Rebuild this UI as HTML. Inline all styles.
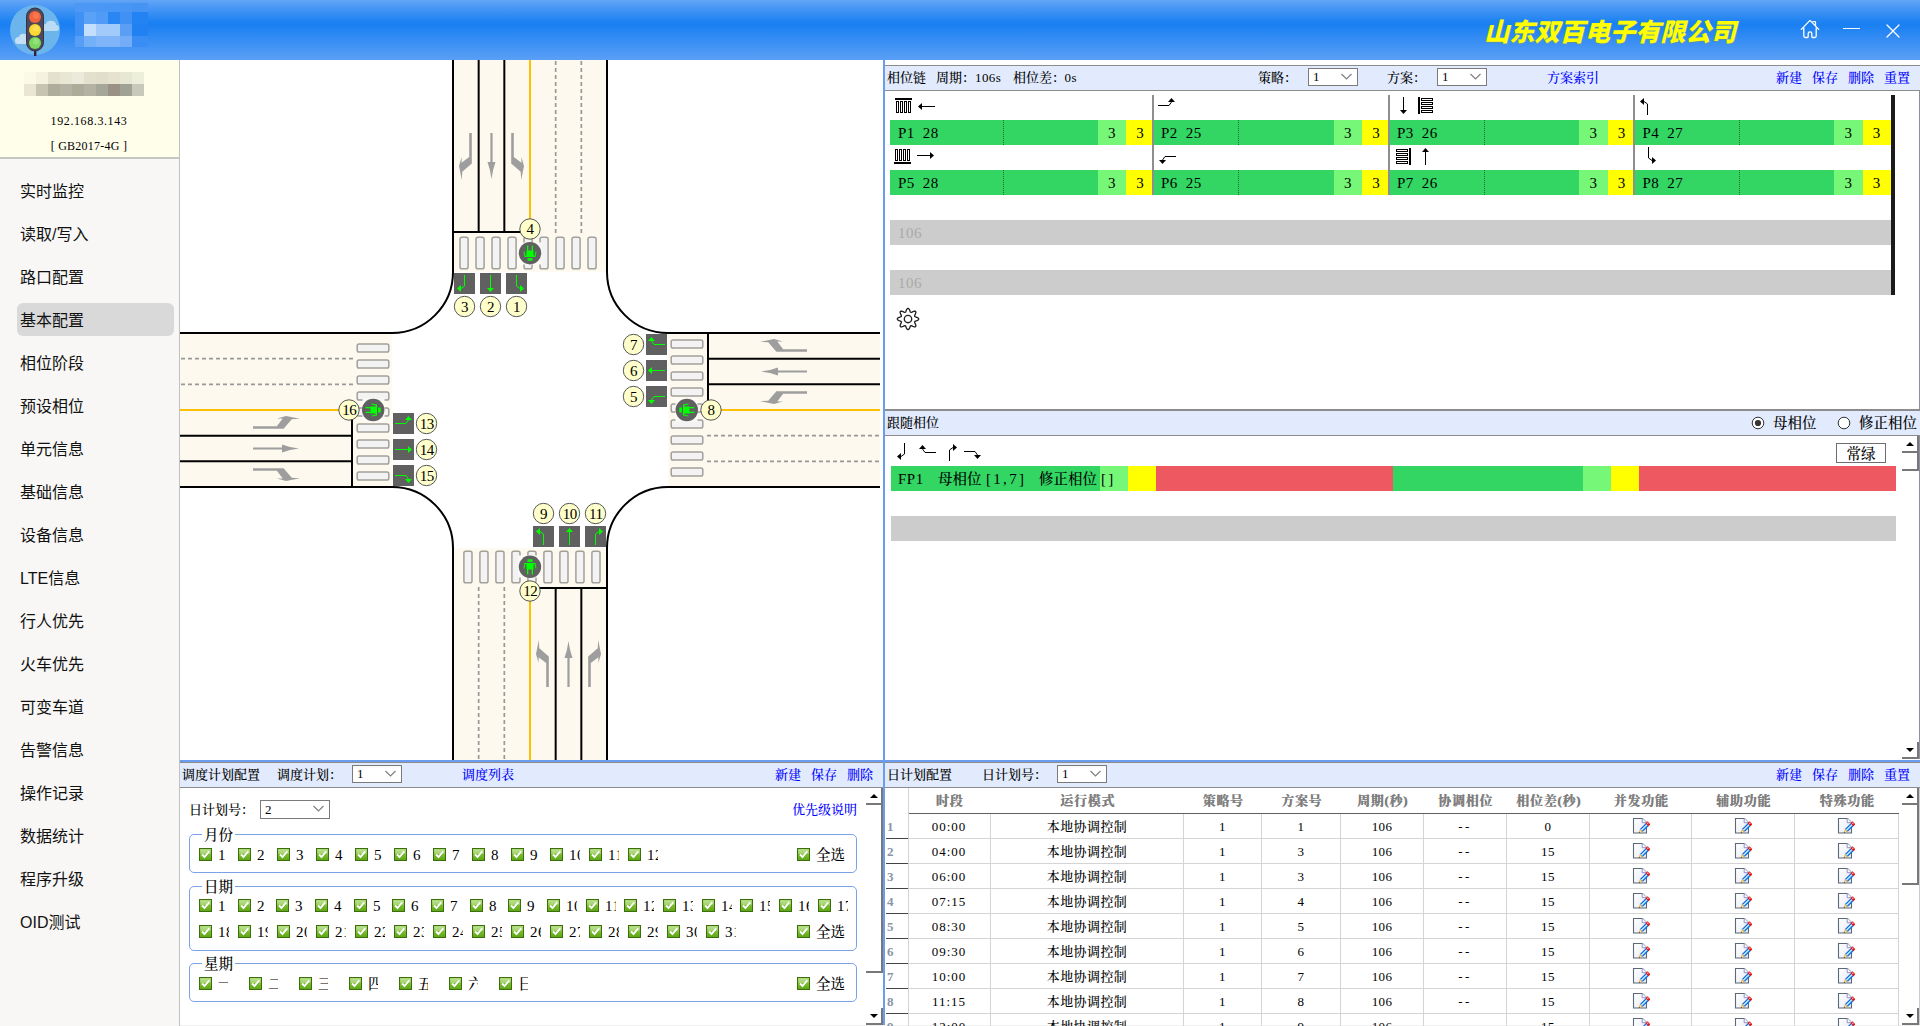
<!DOCTYPE html><html lang="zh"><head><meta charset="utf-8"><title>信号机配置</title><style>

html,body{margin:0;padding:0}
body{width:1920px;height:1026px;overflow:hidden;background:#fff;position:relative;font-family:'Liberation Serif','Noto Serif CJK SC',serif;font-size:12px;color:#000;line-height:14px;font-weight:500}
div,span,svg{position:absolute;box-sizing:border-box}
.t{white-space:nowrap;height:14px;line-height:14px;font-size:13px;margin-left:-1px}
.b{color:#0000ff}
.hd{background:#e1ebfd;border-top:1px solid #8c8c8c;border-bottom:1px solid #8c8c8c}
.sel{background:#fff;border:1px solid #7a7a7a;height:18px;font-size:13px;line-height:16px;padding-left:4px}
.menu{left:20px;font-weight:400;font-family:'Liberation Sans','Noto Sans CJK SC',sans-serif;font-size:16px;line-height:20px;height:20px;color:#111;white-space:nowrap}
.bar{height:25px;line-height:27px;overflow:hidden;font-size:15px;white-space:nowrap;letter-spacing:.5px;word-spacing:3.700px}
.cb{width:13px;height:13px}
.cl{font-size:15px;letter-spacing:.5px;line-height:16px;height:16px;overflow:hidden;white-space:nowrap;font-family:'Liberation Serif','Noto Serif CJK SC',serif}
.gb{border:1px solid #7ba2e7;border-radius:5px}
.gl{background:#fff;font-size:14.500px;line-height:16px;height:16px;padding:0 2px;white-space:nowrap}
.th{font-weight:bold;color:#7f7f7f;text-shadow:.5px 0 0 #7f7f7f;text-align:center;font-size:13px;letter-spacing:.7px;height:25px;line-height:25px;white-space:nowrap}
.td{text-align:center;font-size:13px;height:25px;line-height:25px;white-space:nowrap;border-right:1px solid #d4d4d4;border-bottom:1px solid #d4d4d4}
.rh{font-size:13px;height:25px;line-height:25px;color:#8a95a5;font-weight:bold;border-bottom:1px solid #444;border-right:1px solid #d4d4d4;padding-left:1px}

</style></head><body>
<svg width="0" height="0" style="left:0;top:0"><defs><linearGradient id="cg" x1="0" y1="0" x2="0" y2="1"><stop offset="0" stop-color="#a9d971"/><stop offset=".5" stop-color="#7cbf2e"/><stop offset="1" stop-color="#5ba511"/></linearGradient><linearGradient id="pg" x1="0" y1="0" x2="1" y2="1"><stop offset="0" stop-color="#fff"/><stop offset="1" stop-color="#e6eaf4"/></linearGradient><symbol id="cb" viewBox="0 0 13 13"><rect x=".5" y=".5" width="12" height="12" fill="url(#cg)" stroke="#3c6e0d"/><rect x="1.500" y="1.500" width="10" height="4.500" fill="#fff" opacity=".28"/><path d="M3.200 7.300 L5.600 9.600 L10.300 4.200" fill="none" stroke="#4a8a14" stroke-width="2" opacity=".5"/><path d="M3 6.500 L5.500 9 L10.300 3.400" fill="none" stroke="#fff" stroke-width="1.900"/></symbol><symbol id="ed" viewBox="0 0 18 18"><path d="M1.500 1.500 H10.500 L14.500 5.500 V16 H1.500 Z" fill="url(#pg)" stroke="#5d6878" stroke-width="1.1"/><path d="M10.200 1.800 V5.700 H14.200" fill="#fff" stroke="#8a84c8" stroke-width=".9"/><path d="M10.500 1.500 L14.500 5.500" stroke="#c0c6d0" stroke-width="1"/><path d="M13.79 6.18 L7.99 11.98 L10.82 14.81 L16.62 9.01 Z" fill="#0b5fd6"/><path d="M14.57 6.96 L8.77 12.76 L9.90 13.89 L15.70 8.09 Z" fill="#bdeaff"/><path d="M15.70 8.09 L9.90 13.89 L10.25 14.24 L16.05 8.45 Z" fill="#2f9bf0"/><path d="M15.63 4.34 L13.65 6.32 L16.48 9.15 L18.46 7.17 Z" fill="#e8140f"/><circle cx="15.800" cy="6.200" r=".7" fill="#ffd0e8"/><path d="M7.99 11.98 L10.82 14.81 L6.86 15.94 Z" fill="#d9a030"/><path d="M8.34 13.18 L9.62 14.46 L7.71 15.09 Z" fill="#fff6da"/><path d="M7.14 14.81 L7.99 15.66 L6.72 16.08 Z" fill="#3a3020"/></symbol></defs></svg>
<div style="left:0;top:60px;width:180px;height:966px;background:#f8f7f5;border-right:1px solid #bfc2bf"></div>
<div style="left:0;top:60px;width:179px;height:99px;background:#fffeeb;border-bottom:2px solid #c4c8c0"></div>
<div style="left:24px;top:72px;width:12px;height:12px;background:#fbfae6"></div>
<div style="left:24px;top:84px;width:12px;height:12px;background:#e9e7d3"></div>
<div style="left:36px;top:72px;width:12px;height:12px;background:#f5f3df"></div>
<div style="left:36px;top:84px;width:12px;height:12px;background:#c7c5b2"></div>
<div style="left:48px;top:72px;width:12px;height:12px;background:#e4e2cc"></div>
<div style="left:48px;top:84px;width:12px;height:12px;background:#aeac9b"></div>
<div style="left:60px;top:72px;width:12px;height:12px;background:#e8e7d3"></div>
<div style="left:60px;top:84px;width:12px;height:12px;background:#b4b3a4"></div>
<div style="left:72px;top:72px;width:12px;height:12px;background:#eceada"></div>
<div style="left:72px;top:84px;width:12px;height:12px;background:#adac9b"></div>
<div style="left:84px;top:72px;width:12px;height:12px;background:#e3e1cd"></div>
<div style="left:84px;top:84px;width:12px;height:12px;background:#b3b2a3"></div>
<div style="left:96px;top:72px;width:12px;height:12px;background:#e1dfca"></div>
<div style="left:96px;top:84px;width:12px;height:12px;background:#a7a799"></div>
<div style="left:108px;top:72px;width:12px;height:12px;background:#e5e3cf"></div>
<div style="left:108px;top:84px;width:12px;height:12px;background:#999285"></div>
<div style="left:120px;top:72px;width:12px;height:12px;background:#e8e7d3"></div>
<div style="left:120px;top:84px;width:12px;height:12px;background:#a1a296"></div>
<div style="left:132px;top:72px;width:12px;height:12px;background:#edeedc"></div>
<div style="left:132px;top:84px;width:12px;height:12px;background:#c8c9bb"></div>
<div class="t" style="left:0;top:114px;width:178px;margin-left:0;text-align:center;font-size:12px;letter-spacing:.6px">192.168.3.143</div>
<div class="t" style="left:0;top:139px;width:178px;margin-left:0;text-align:center;font-size:12px;letter-spacing:.25px">[ GB2017-4G ]</div>
<div style="left:17px;top:303px;width:157px;height:33px;background:#d9d9d9;border-radius:6px"></div>
<div class="menu" style="top:182px">实时监控</div>
<div class="menu" style="top:225px">读取/写入</div>
<div class="menu" style="top:268px">路口配置</div>
<div class="menu" style="top:311px">基本配置</div>
<div class="menu" style="top:354px">相位阶段</div>
<div class="menu" style="top:397px">预设相位</div>
<div class="menu" style="top:440px">单元信息</div>
<div class="menu" style="top:483px">基础信息</div>
<div class="menu" style="top:526px">设备信息</div>
<div class="menu" style="top:569px">LTE信息</div>
<div class="menu" style="top:612px">行人优先</div>
<div class="menu" style="top:655px">火车优先</div>
<div class="menu" style="top:698px">可变车道</div>
<div class="menu" style="top:741px">告警信息</div>
<div class="menu" style="top:784px">操作记录</div>
<div class="menu" style="top:827px">数据统计</div>
<div class="menu" style="top:870px">程序升级</div>
<div class="menu" style="top:913px">OID测试</div>
<svg style="left:180px;top:60px" width="700" height="700" viewBox="-350 -350 700 700">
<rect x="-350" y="-350" width="700" height="700" fill="#fff"/>
<g transform="rotate(0)"><rect x="-77" y="138.300" width="154" height="214" fill="#fdf9ee"/>
<line x1="-25.67" y1="177" x2="-25.67" y2="352" stroke="#999" stroke-width="1.7" stroke-dasharray="4,3"/>
<line x1="-51.33" y1="177" x2="-51.33" y2="352" stroke="#999" stroke-width="1.7" stroke-dasharray="4,3"/>
<line x1="0" y1="182" x2="0" y2="352" stroke="#ffc000" stroke-width="2"/>
<line x1="25.67" y1="178" x2="25.67" y2="352" stroke="#000" stroke-width="2"/>
<line x1="51.33" y1="178" x2="51.33" y2="352" stroke="#000" stroke-width="2"/>
<line x1="0" y1="178" x2="78" y2="178" stroke="#000" stroke-width="2"/>
<rect x="-66.1" y="141.200" width="8.1" height="31.600" rx="1.8" fill="#f3f3f3" stroke="#a3a09c" stroke-width="1.5"/>
<rect x="-50.1" y="141.200" width="8.1" height="31.600" rx="1.8" fill="#f3f3f3" stroke="#a3a09c" stroke-width="1.5"/>
<rect x="-34.1" y="141.200" width="8.1" height="31.600" rx="1.8" fill="#f3f3f3" stroke="#a3a09c" stroke-width="1.5"/>
<rect x="-18.1" y="141.200" width="8.1" height="31.600" rx="1.8" fill="#f3f3f3" stroke="#a3a09c" stroke-width="1.5"/>
<rect x="-2.1" y="141.200" width="8.1" height="31.600" rx="1.8" fill="#f3f3f3" stroke="#a3a09c" stroke-width="1.5"/>
<rect x="13.9" y="141.200" width="8.1" height="31.600" rx="1.8" fill="#f3f3f3" stroke="#a3a09c" stroke-width="1.5"/>
<rect x="29.9" y="141.200" width="8.1" height="31.600" rx="1.8" fill="#f3f3f3" stroke="#a3a09c" stroke-width="1.5"/>
<rect x="45.9" y="141.200" width="8.1" height="31.600" rx="1.8" fill="#f3f3f3" stroke="#a3a09c" stroke-width="1.5"/>
<rect x="61.9" y="141.200" width="8.1" height="31.600" rx="1.8" fill="#f3f3f3" stroke="#a3a09c" stroke-width="1.5"/>
<path d="M-77 352 L-77 138 A61 61 0 0 0 -138 77" fill="none" stroke="#000" stroke-width="2"/>
<line x1="77" y1="352" x2="77" y2="138" stroke="#000" stroke-width="2"/>
<path d="M16.2 277.0 L18.8 277.0 L18.8 246.4 L9.3 238.2 L8.8 230.0 L6.0 244.0 L8.6 253.0 L8.6 247.3 L16.2 253.1 Z" fill="#9e9e9e"/>
<path d="M37.4 277 V248 H34.5 L36.9 240 L38.5 231 L40.1 240 L42.5 248 H39.6 V277 Z" fill="#9e9e9e"/>
<path d="M60.8 277.0 L58.2 277.0 L58.2 246.4 L67.7 238.2 L68.2 230.0 L71.0 244.0 L68.4 253.0 L68.4 247.3 L60.8 253.1 Z" fill="#9e9e9e"/>
<rect x="3" y="116" width="21" height="21" fill="#606060"/>
<rect x="29" y="116" width="21" height="21" fill="#606060"/>
<rect x="55" y="116" width="21" height="21" fill="#606060"/>
<path d="M13.5 135.0 L13.5 124.0 L10.0 121.5" fill="none" stroke="#00ff00" stroke-width="1"/><path d="M10.0 118.0 L10.0 125.0 L6.0 121.5 Z" fill="#00ff00"/>
<path d="M39.5 135.0 L39.5 122.0" fill="none" stroke="#00ff00" stroke-width="1"/><path d="M43.0 122.0 L36.0 122.0 L39.5 118.0 Z" fill="#00ff00"/>
<path d="M65.5 135.0 L65.5 124.0 L69.0 121.5" fill="none" stroke="#00ff00" stroke-width="1"/><path d="M69.0 118.0 L69.0 125.0 L73.0 121.5 Z" fill="#00ff00"/>
<rect x="-11.500" y="145.500" width="23" height="22" fill="#fefdfa" opacity=".92"/>
<circle cx="0" cy="156.800" r="11.2" fill="#606060"/>
<g fill="#00ff00"><rect x="-2.500" y="149.300" width="5" height="2.6"/><rect x="-3.500" y="153" width="7" height="6.5"/><path d="M-6.500 158.500 L-5.500 153 H-3 V154.200 H-4.600 L-5.500 158.500 Z"/><path d="M6.500 158.500 L5.500 153 H3 V154.200 H4.600 L5.500 158.500 Z"/><rect x="-3" y="159" width="1.3" height="5.5"/><rect x="1.700" y="159" width="1.300" height="5.500"/></g></g>
<g transform="rotate(90)"><rect x="-77" y="138.300" width="154" height="214" fill="#fdf9ee"/>
<line x1="-25.67" y1="177" x2="-25.67" y2="352" stroke="#999" stroke-width="1.7" stroke-dasharray="4,3"/>
<line x1="-51.33" y1="177" x2="-51.33" y2="352" stroke="#999" stroke-width="1.7" stroke-dasharray="4,3"/>
<line x1="0" y1="182" x2="0" y2="352" stroke="#ffc000" stroke-width="2"/>
<line x1="25.67" y1="178" x2="25.67" y2="352" stroke="#000" stroke-width="2"/>
<line x1="51.33" y1="178" x2="51.33" y2="352" stroke="#000" stroke-width="2"/>
<line x1="0" y1="178" x2="78" y2="178" stroke="#000" stroke-width="2"/>
<rect x="-66.1" y="141.200" width="8.1" height="31.600" rx="1.8" fill="#f3f3f3" stroke="#a3a09c" stroke-width="1.5"/>
<rect x="-50.1" y="141.200" width="8.1" height="31.600" rx="1.8" fill="#f3f3f3" stroke="#a3a09c" stroke-width="1.5"/>
<rect x="-34.1" y="141.200" width="8.1" height="31.600" rx="1.8" fill="#f3f3f3" stroke="#a3a09c" stroke-width="1.5"/>
<rect x="-18.1" y="141.200" width="8.1" height="31.600" rx="1.8" fill="#f3f3f3" stroke="#a3a09c" stroke-width="1.5"/>
<rect x="-2.1" y="141.200" width="8.1" height="31.600" rx="1.8" fill="#f3f3f3" stroke="#a3a09c" stroke-width="1.5"/>
<rect x="13.9" y="141.200" width="8.1" height="31.600" rx="1.8" fill="#f3f3f3" stroke="#a3a09c" stroke-width="1.5"/>
<rect x="29.9" y="141.200" width="8.1" height="31.600" rx="1.8" fill="#f3f3f3" stroke="#a3a09c" stroke-width="1.5"/>
<rect x="45.9" y="141.200" width="8.1" height="31.600" rx="1.8" fill="#f3f3f3" stroke="#a3a09c" stroke-width="1.5"/>
<rect x="61.9" y="141.200" width="8.1" height="31.600" rx="1.8" fill="#f3f3f3" stroke="#a3a09c" stroke-width="1.5"/>
<path d="M-77 352 L-77 138 A61 61 0 0 0 -138 77" fill="none" stroke="#000" stroke-width="2"/>
<line x1="77" y1="352" x2="77" y2="138" stroke="#000" stroke-width="2"/>
<path d="M16.2 277.0 L18.8 277.0 L18.8 246.4 L9.3 238.2 L8.8 230.0 L6.0 244.0 L8.6 253.0 L8.6 247.3 L16.2 253.1 Z" fill="#9e9e9e"/>
<path d="M37.4 277 V248 H34.5 L36.9 240 L38.5 231 L40.1 240 L42.5 248 H39.6 V277 Z" fill="#9e9e9e"/>
<path d="M60.8 277.0 L58.2 277.0 L58.2 246.4 L67.7 238.2 L68.2 230.0 L71.0 244.0 L68.4 253.0 L68.4 247.3 L60.8 253.1 Z" fill="#9e9e9e"/>
<rect x="3" y="116" width="21" height="21" fill="#606060"/>
<rect x="29" y="116" width="21" height="21" fill="#606060"/>
<rect x="55" y="116" width="21" height="21" fill="#606060"/>
<path d="M13.5 135.0 L13.5 124.0 L10.0 121.5" fill="none" stroke="#00ff00" stroke-width="1"/><path d="M10.0 118.0 L10.0 125.0 L6.0 121.5 Z" fill="#00ff00"/>
<path d="M39.5 135.0 L39.5 122.0" fill="none" stroke="#00ff00" stroke-width="1"/><path d="M43.0 122.0 L36.0 122.0 L39.5 118.0 Z" fill="#00ff00"/>
<path d="M65.5 135.0 L65.5 124.0 L69.0 121.5" fill="none" stroke="#00ff00" stroke-width="1"/><path d="M69.0 118.0 L69.0 125.0 L73.0 121.5 Z" fill="#00ff00"/>
<rect x="-11.500" y="145.500" width="23" height="22" fill="#fefdfa" opacity=".92"/>
<circle cx="0" cy="156.800" r="11.2" fill="#606060"/>
<g fill="#00ff00"><rect x="-2.500" y="149.300" width="5" height="2.6"/><rect x="-3.500" y="153" width="7" height="6.5"/><path d="M-6.500 158.500 L-5.500 153 H-3 V154.200 H-4.600 L-5.500 158.500 Z"/><path d="M6.500 158.500 L5.500 153 H3 V154.200 H4.600 L5.500 158.500 Z"/><rect x="-3" y="159" width="1.3" height="5.5"/><rect x="1.700" y="159" width="1.300" height="5.500"/></g></g>
<g transform="rotate(180)"><rect x="-77" y="138.300" width="154" height="214" fill="#fdf9ee"/>
<line x1="-25.67" y1="177" x2="-25.67" y2="352" stroke="#999" stroke-width="1.7" stroke-dasharray="4,3"/>
<line x1="-51.33" y1="177" x2="-51.33" y2="352" stroke="#999" stroke-width="1.7" stroke-dasharray="4,3"/>
<line x1="0" y1="182" x2="0" y2="352" stroke="#ffc000" stroke-width="2"/>
<line x1="25.67" y1="178" x2="25.67" y2="352" stroke="#000" stroke-width="2"/>
<line x1="51.33" y1="178" x2="51.33" y2="352" stroke="#000" stroke-width="2"/>
<line x1="0" y1="178" x2="78" y2="178" stroke="#000" stroke-width="2"/>
<rect x="-66.1" y="141.200" width="8.1" height="31.600" rx="1.8" fill="#f3f3f3" stroke="#a3a09c" stroke-width="1.5"/>
<rect x="-50.1" y="141.200" width="8.1" height="31.600" rx="1.8" fill="#f3f3f3" stroke="#a3a09c" stroke-width="1.5"/>
<rect x="-34.1" y="141.200" width="8.1" height="31.600" rx="1.8" fill="#f3f3f3" stroke="#a3a09c" stroke-width="1.5"/>
<rect x="-18.1" y="141.200" width="8.1" height="31.600" rx="1.8" fill="#f3f3f3" stroke="#a3a09c" stroke-width="1.5"/>
<rect x="-2.1" y="141.200" width="8.1" height="31.600" rx="1.8" fill="#f3f3f3" stroke="#a3a09c" stroke-width="1.5"/>
<rect x="13.9" y="141.200" width="8.1" height="31.600" rx="1.8" fill="#f3f3f3" stroke="#a3a09c" stroke-width="1.5"/>
<rect x="29.9" y="141.200" width="8.1" height="31.600" rx="1.8" fill="#f3f3f3" stroke="#a3a09c" stroke-width="1.5"/>
<rect x="45.9" y="141.200" width="8.1" height="31.600" rx="1.8" fill="#f3f3f3" stroke="#a3a09c" stroke-width="1.5"/>
<rect x="61.9" y="141.200" width="8.1" height="31.600" rx="1.8" fill="#f3f3f3" stroke="#a3a09c" stroke-width="1.5"/>
<path d="M-77 352 L-77 138 A61 61 0 0 0 -138 77" fill="none" stroke="#000" stroke-width="2"/>
<line x1="77" y1="352" x2="77" y2="138" stroke="#000" stroke-width="2"/>
<path d="M16.2 277.0 L18.8 277.0 L18.8 246.4 L9.3 238.2 L8.8 230.0 L6.0 244.0 L8.6 253.0 L8.6 247.3 L16.2 253.1 Z" fill="#9e9e9e"/>
<path d="M37.4 277 V248 H34.5 L36.9 240 L38.5 231 L40.1 240 L42.5 248 H39.6 V277 Z" fill="#9e9e9e"/>
<path d="M60.8 277.0 L58.2 277.0 L58.2 246.4 L67.7 238.2 L68.2 230.0 L71.0 244.0 L68.4 253.0 L68.4 247.3 L60.8 253.1 Z" fill="#9e9e9e"/>
<rect x="3" y="116" width="21" height="21" fill="#606060"/>
<rect x="29" y="116" width="21" height="21" fill="#606060"/>
<rect x="55" y="116" width="21" height="21" fill="#606060"/>
<path d="M13.5 135.0 L13.5 124.0 L10.0 121.5" fill="none" stroke="#00ff00" stroke-width="1"/><path d="M10.0 118.0 L10.0 125.0 L6.0 121.5 Z" fill="#00ff00"/>
<path d="M39.5 135.0 L39.5 122.0" fill="none" stroke="#00ff00" stroke-width="1"/><path d="M43.0 122.0 L36.0 122.0 L39.5 118.0 Z" fill="#00ff00"/>
<path d="M65.5 135.0 L65.5 124.0 L69.0 121.5" fill="none" stroke="#00ff00" stroke-width="1"/><path d="M69.0 118.0 L69.0 125.0 L73.0 121.5 Z" fill="#00ff00"/>
<rect x="-11.500" y="145.500" width="23" height="22" fill="#fefdfa" opacity=".92"/>
<circle cx="0" cy="156.800" r="11.2" fill="#606060"/>
<g fill="#00ff00"><rect x="-2.500" y="149.300" width="5" height="2.6"/><rect x="-3.500" y="153" width="7" height="6.5"/><path d="M-6.500 158.500 L-5.500 153 H-3 V154.200 H-4.600 L-5.500 158.500 Z"/><path d="M6.500 158.500 L5.500 153 H3 V154.200 H4.600 L5.500 158.500 Z"/><rect x="-3" y="159" width="1.3" height="5.5"/><rect x="1.700" y="159" width="1.300" height="5.500"/></g></g>
<g transform="rotate(270)"><rect x="-77" y="138.300" width="154" height="214" fill="#fdf9ee"/>
<line x1="-25.67" y1="177" x2="-25.67" y2="352" stroke="#999" stroke-width="1.7" stroke-dasharray="4,3"/>
<line x1="-51.33" y1="177" x2="-51.33" y2="352" stroke="#999" stroke-width="1.7" stroke-dasharray="4,3"/>
<line x1="0" y1="182" x2="0" y2="352" stroke="#ffc000" stroke-width="2"/>
<line x1="25.67" y1="178" x2="25.67" y2="352" stroke="#000" stroke-width="2"/>
<line x1="51.33" y1="178" x2="51.33" y2="352" stroke="#000" stroke-width="2"/>
<line x1="0" y1="178" x2="78" y2="178" stroke="#000" stroke-width="2"/>
<rect x="-66.1" y="141.200" width="8.1" height="31.600" rx="1.8" fill="#f3f3f3" stroke="#a3a09c" stroke-width="1.5"/>
<rect x="-50.1" y="141.200" width="8.1" height="31.600" rx="1.8" fill="#f3f3f3" stroke="#a3a09c" stroke-width="1.5"/>
<rect x="-34.1" y="141.200" width="8.1" height="31.600" rx="1.8" fill="#f3f3f3" stroke="#a3a09c" stroke-width="1.5"/>
<rect x="-18.1" y="141.200" width="8.1" height="31.600" rx="1.8" fill="#f3f3f3" stroke="#a3a09c" stroke-width="1.5"/>
<rect x="-2.1" y="141.200" width="8.1" height="31.600" rx="1.8" fill="#f3f3f3" stroke="#a3a09c" stroke-width="1.5"/>
<rect x="13.9" y="141.200" width="8.1" height="31.600" rx="1.8" fill="#f3f3f3" stroke="#a3a09c" stroke-width="1.5"/>
<rect x="29.9" y="141.200" width="8.1" height="31.600" rx="1.8" fill="#f3f3f3" stroke="#a3a09c" stroke-width="1.5"/>
<rect x="45.9" y="141.200" width="8.1" height="31.600" rx="1.8" fill="#f3f3f3" stroke="#a3a09c" stroke-width="1.5"/>
<rect x="61.9" y="141.200" width="8.1" height="31.600" rx="1.8" fill="#f3f3f3" stroke="#a3a09c" stroke-width="1.5"/>
<path d="M-77 352 L-77 138 A61 61 0 0 0 -138 77" fill="none" stroke="#000" stroke-width="2"/>
<line x1="77" y1="352" x2="77" y2="138" stroke="#000" stroke-width="2"/>
<path d="M16.2 277.0 L18.8 277.0 L18.8 246.4 L9.3 238.2 L8.8 230.0 L6.0 244.0 L8.6 253.0 L8.6 247.3 L16.2 253.1 Z" fill="#9e9e9e"/>
<path d="M37.4 277 V248 H34.5 L36.9 240 L38.5 231 L40.1 240 L42.5 248 H39.6 V277 Z" fill="#9e9e9e"/>
<path d="M60.8 277.0 L58.2 277.0 L58.2 246.4 L67.7 238.2 L68.2 230.0 L71.0 244.0 L68.4 253.0 L68.4 247.3 L60.8 253.1 Z" fill="#9e9e9e"/>
<rect x="3" y="116" width="21" height="21" fill="#606060"/>
<rect x="29" y="116" width="21" height="21" fill="#606060"/>
<rect x="55" y="116" width="21" height="21" fill="#606060"/>
<path d="M13.5 135.0 L13.5 124.0 L10.0 121.5" fill="none" stroke="#00ff00" stroke-width="1"/><path d="M10.0 118.0 L10.0 125.0 L6.0 121.5 Z" fill="#00ff00"/>
<path d="M39.5 135.0 L39.5 122.0" fill="none" stroke="#00ff00" stroke-width="1"/><path d="M43.0 122.0 L36.0 122.0 L39.5 118.0 Z" fill="#00ff00"/>
<path d="M65.5 135.0 L65.5 124.0 L69.0 121.5" fill="none" stroke="#00ff00" stroke-width="1"/><path d="M69.0 118.0 L69.0 125.0 L73.0 121.5 Z" fill="#00ff00"/>
<rect x="-11.500" y="145.500" width="23" height="22" fill="#fefdfa" opacity=".92"/>
<circle cx="0" cy="156.800" r="11.2" fill="#606060"/>
<g fill="#00ff00"><rect x="-2.500" y="149.300" width="5" height="2.6"/><rect x="-3.500" y="153" width="7" height="6.5"/><path d="M-6.500 158.500 L-5.500 153 H-3 V154.200 H-4.600 L-5.500 158.500 Z"/><path d="M6.500 158.500 L5.500 153 H3 V154.200 H4.600 L5.500 158.500 Z"/><rect x="-3" y="159" width="1.3" height="5.5"/><rect x="1.700" y="159" width="1.300" height="5.500"/></g></g>
<circle cx="13.5" cy="103.5" r="10.2" fill="#ffffcc" stroke="#444" stroke-width=".9"/>
<text x="13.8" y="108.7" text-anchor="middle" font-family="'Liberation Serif',serif" font-size="15" fill="#000">9</text>
<circle cx="39.5" cy="103.5" r="10.2" fill="#ffffcc" stroke="#444" stroke-width=".9"/>
<text x="39.8" y="108.7" text-anchor="middle" font-family="'Liberation Serif',serif" font-size="15" fill="#000" letter-spacing="-.4">10</text>
<circle cx="65.5" cy="103.5" r="10.2" fill="#ffffcc" stroke="#444" stroke-width=".9"/>
<text x="65.8" y="108.7" text-anchor="middle" font-family="'Liberation Serif',serif" font-size="15" fill="#000" letter-spacing="-.4">11</text>
<circle cx="0.0" cy="181.0" r="10.2" fill="#ffffcc" stroke="#444" stroke-width=".9"/>
<text x="0.3" y="186.2" text-anchor="middle" font-family="'Liberation Serif',serif" font-size="15" fill="#000" letter-spacing="-.4">12</text>
<circle cx="103.5" cy="-13.5" r="10.2" fill="#ffffcc" stroke="#444" stroke-width=".9"/>
<text x="103.8" y="-8.3" text-anchor="middle" font-family="'Liberation Serif',serif" font-size="15" fill="#000">5</text>
<circle cx="103.5" cy="-39.5" r="10.2" fill="#ffffcc" stroke="#444" stroke-width=".9"/>
<text x="103.8" y="-34.3" text-anchor="middle" font-family="'Liberation Serif',serif" font-size="15" fill="#000">6</text>
<circle cx="103.5" cy="-65.5" r="10.2" fill="#ffffcc" stroke="#444" stroke-width=".9"/>
<text x="103.8" y="-60.3" text-anchor="middle" font-family="'Liberation Serif',serif" font-size="15" fill="#000">7</text>
<circle cx="181.0" cy="0.0" r="10.2" fill="#ffffcc" stroke="#444" stroke-width=".9"/>
<text x="181.3" y="5.2" text-anchor="middle" font-family="'Liberation Serif',serif" font-size="15" fill="#000">8</text>
<circle cx="-13.5" cy="-103.5" r="10.2" fill="#ffffcc" stroke="#444" stroke-width=".9"/>
<text x="-13.2" y="-98.3" text-anchor="middle" font-family="'Liberation Serif',serif" font-size="15" fill="#000">1</text>
<circle cx="-39.5" cy="-103.5" r="10.2" fill="#ffffcc" stroke="#444" stroke-width=".9"/>
<text x="-39.2" y="-98.3" text-anchor="middle" font-family="'Liberation Serif',serif" font-size="15" fill="#000">2</text>
<circle cx="-65.5" cy="-103.5" r="10.2" fill="#ffffcc" stroke="#444" stroke-width=".9"/>
<text x="-65.2" y="-98.3" text-anchor="middle" font-family="'Liberation Serif',serif" font-size="15" fill="#000">3</text>
<circle cx="0.0" cy="-181.0" r="10.2" fill="#ffffcc" stroke="#444" stroke-width=".9"/>
<text x="0.3" y="-175.8" text-anchor="middle" font-family="'Liberation Serif',serif" font-size="15" fill="#000">4</text>
<circle cx="-103.5" cy="13.5" r="10.2" fill="#ffffcc" stroke="#444" stroke-width=".9"/>
<text x="-103.2" y="18.7" text-anchor="middle" font-family="'Liberation Serif',serif" font-size="15" fill="#000" letter-spacing="-.4">13</text>
<circle cx="-103.5" cy="39.5" r="10.2" fill="#ffffcc" stroke="#444" stroke-width=".9"/>
<text x="-103.2" y="44.7" text-anchor="middle" font-family="'Liberation Serif',serif" font-size="15" fill="#000" letter-spacing="-.4">14</text>
<circle cx="-103.5" cy="65.5" r="10.2" fill="#ffffcc" stroke="#444" stroke-width=".9"/>
<text x="-103.2" y="70.7" text-anchor="middle" font-family="'Liberation Serif',serif" font-size="15" fill="#000" letter-spacing="-.4">15</text>
<circle cx="-181.0" cy="0.0" r="10.2" fill="#ffffcc" stroke="#444" stroke-width=".9"/>
<text x="-180.7" y="5.2" text-anchor="middle" font-family="'Liberation Serif',serif" font-size="15" fill="#000" letter-spacing="-.4">16</text>
</svg>
<div style="left:882.700px;top:60px;width:2.800px;height:966px;background:#6a9df0"></div>
<div style="left:1919px;top:91px;width:1px;height:668px;background:#8a909c"></div>
<div style="left:1919px;top:788px;width:1px;height:237px;background:#c8ccd4"></div>
<div class="hd" style="left:885px;top:65px;width:1035px;height:26px"></div>
<div class="t" style="left:888px;top:71px;">相位链</div>
<div class="t" style="left:937px;top:71px;">周期：</div>
<div class="t" style="left:976px;top:71px;letter-spacing:.4px">106s</div>
<div class="t" style="left:1014px;top:71px;">相位差：</div>
<div class="t" style="left:1065.5px;top:71px;letter-spacing:.4px">0s</div>
<div class="t" style="left:1259px;top:71px;">策略：</div>
<div class="sel" style="left:1308px;top:68px;width:50px;height:18px;line-height:16px">1<svg style="right:4px;top:4px" width="13" height="8" viewBox="0 0 13 8"><path d="M1.500 1 L6.500 6 L11.500 1" fill="none" stroke="#808080" stroke-width="1.2"/></svg></div>
<div class="t" style="left:1388px;top:71px;">方案：</div>
<div class="sel" style="left:1437px;top:68px;width:50px;height:18px;line-height:16px">1<svg style="right:4px;top:4px" width="13" height="8" viewBox="0 0 13 8"><path d="M1.500 1 L6.500 6 L11.500 1" fill="none" stroke="#808080" stroke-width="1.2"/></svg></div>
<div class="t b" style="left:1548px;top:71px;">方案索引</div>
<div class="t b" style="left:1777px;top:71px;">新建</div>
<div class="t b" style="left:1813px;top:71px;">保存</div>
<div class="t b" style="left:1849px;top:71px;">删除</div>
<div class="t b" style="left:1885px;top:71px;">重置</div>
<div class="bar" style="left:890.0px;top:120px;width:207.8px;background:#33d663;padding-left:8.0px">P1 28</div>
<div class="bar" style="left:1097.8px;top:120px;width:28.3px;background:#76f778;text-align:center">3</div>
<div class="bar" style="left:1126.1px;top:120px;width:28.3px;background:#ffff00;text-align:center">3</div>
<div style="left:1003px;top:120px;width:0;height:25px;border-left:1px dotted #1c6b32"></div>
<div class="bar" style="left:1153.4px;top:120px;width:180.4px;background:#33d663;padding-left:7.5px">P2 25</div>
<div class="bar" style="left:1333.8px;top:120px;width:28.3px;background:#76f778;text-align:center">3</div>
<div class="bar" style="left:1362.2px;top:120px;width:28.3px;background:#ffff00;text-align:center">3</div>
<div style="left:1238px;top:120px;width:0;height:25px;border-left:1px dotted #1c6b32"></div>
<div class="bar" style="left:1389.5px;top:120px;width:189.9px;background:#33d663;padding-left:7.5px">P3 26</div>
<div class="bar" style="left:1579.4px;top:120px;width:28.3px;background:#76f778;text-align:center">3</div>
<div class="bar" style="left:1607.7px;top:120px;width:28.3px;background:#ffff00;text-align:center">3</div>
<div style="left:1484px;top:120px;width:0;height:25px;border-left:1px dotted #1c6b32"></div>
<div class="bar" style="left:1635.0px;top:120px;width:199.3px;background:#33d663;padding-left:7.5px">P4 27</div>
<div class="bar" style="left:1834.3px;top:120px;width:28.3px;background:#76f778;text-align:center">3</div>
<div class="bar" style="left:1862.7px;top:120px;width:28.3px;background:#ffff00;text-align:center">3</div>
<div style="left:1739px;top:120px;width:0;height:25px;border-left:1px dotted #1c6b32"></div>
<div class="bar" style="left:890.0px;top:170px;width:207.8px;background:#33d663;padding-left:8.0px">P5 28</div>
<div class="bar" style="left:1097.8px;top:170px;width:28.3px;background:#76f778;text-align:center">3</div>
<div class="bar" style="left:1126.1px;top:170px;width:28.3px;background:#ffff00;text-align:center">3</div>
<div style="left:1003px;top:170px;width:0;height:25px;border-left:1px dotted #1c6b32"></div>
<div class="bar" style="left:1153.4px;top:170px;width:180.4px;background:#33d663;padding-left:7.5px">P6 25</div>
<div class="bar" style="left:1333.8px;top:170px;width:28.3px;background:#76f778;text-align:center">3</div>
<div class="bar" style="left:1362.2px;top:170px;width:28.3px;background:#ffff00;text-align:center">3</div>
<div style="left:1238px;top:170px;width:0;height:25px;border-left:1px dotted #1c6b32"></div>
<div class="bar" style="left:1389.5px;top:170px;width:189.9px;background:#33d663;padding-left:7.5px">P7 26</div>
<div class="bar" style="left:1579.4px;top:170px;width:28.3px;background:#76f778;text-align:center">3</div>
<div class="bar" style="left:1607.7px;top:170px;width:28.3px;background:#ffff00;text-align:center">3</div>
<div style="left:1484px;top:170px;width:0;height:25px;border-left:1px dotted #1c6b32"></div>
<div class="bar" style="left:1635.0px;top:170px;width:199.3px;background:#33d663;padding-left:7.5px">P8 27</div>
<div class="bar" style="left:1834.3px;top:170px;width:28.3px;background:#76f778;text-align:center">3</div>
<div class="bar" style="left:1862.7px;top:170px;width:28.3px;background:#ffff00;text-align:center">3</div>
<div style="left:1739px;top:170px;width:0;height:25px;border-left:1px dotted #1c6b32"></div>
<div style="left:1152.0px;top:95px;width:2px;height:100px;background:#8e8e8e"></div>
<div style="left:1388.0px;top:95px;width:2px;height:100px;background:#8e8e8e"></div>
<div style="left:1633.0px;top:95px;width:2px;height:100px;background:#8e8e8e"></div>
<div style="left:1891px;top:95px;width:4px;height:200px;background:#1a1a1a"></div>
<div class="bar" style="left:890px;top:220px;width:1001px;background:#cccccc;color:#a9a9a9;padding-left:8px">106</div>
<div class="bar" style="left:890px;top:270px;width:1001px;background:#cccccc;color:#a9a9a9;padding-left:8px">106</div>
<svg style="left:885px;top:92px" width="1035" height="380" viewBox="885 92 1035 380"><rect x="896.5" y="101.5" width="2" height="11" fill="#fff" stroke="#000" stroke-width="1"/><rect x="900.5" y="101.5" width="2" height="11" fill="#fff" stroke="#000" stroke-width="1"/><rect x="904.5" y="101.5" width="2" height="11" fill="#fff" stroke="#000" stroke-width="1"/><rect x="908.5" y="101.5" width="2" height="11" fill="#fff" stroke="#000" stroke-width="1"/><rect x="895" y="98" width="17" height="2" fill="#000"/><path d="M935.0 106.5 L922.0 106.5" fill="none" stroke="#000" stroke-width="1"/><path d="M922.0 103.0 L922.0 110.0 L918.0 106.5 Z" fill="#000"/><path d="M1158.0 105.5 L1169.0 105.5 L1171.5 102.0" fill="none" stroke="#000" stroke-width="1"/><path d="M1175.0 102.0 L1168.0 102.0 L1171.5 98.0 Z" fill="#000"/><path d="M1403.5 97.0 L1403.5 110.0" fill="none" stroke="#000" stroke-width="1"/><path d="M1400.0 110.0 L1407.0 110.0 L1403.5 114.0 Z" fill="#000"/><rect x="1421.5" y="98.5" width="11" height="2" fill="#fff" stroke="#000" stroke-width="1"/><rect x="1421.5" y="102.5" width="11" height="2" fill="#fff" stroke="#000" stroke-width="1"/><rect x="1421.5" y="106.5" width="11" height="2" fill="#fff" stroke="#000" stroke-width="1"/><rect x="1421.5" y="110.5" width="11" height="2" fill="#fff" stroke="#000" stroke-width="1"/><rect x="1418" y="97" width="2" height="17" fill="#000"/><path d="M1647.5 115.0 L1647.5 104.0 L1644.0 101.5" fill="none" stroke="#000" stroke-width="1"/><path d="M1644.0 98.0 L1644.0 105.0 L1640.0 101.5 Z" fill="#000"/><rect x="895.5" y="149.5" width="2" height="11" fill="#fff" stroke="#000" stroke-width="1"/><rect x="899.5" y="149.5" width="2" height="11" fill="#fff" stroke="#000" stroke-width="1"/><rect x="903.5" y="149.5" width="2" height="11" fill="#fff" stroke="#000" stroke-width="1"/><rect x="907.5" y="149.5" width="2" height="11" fill="#fff" stroke="#000" stroke-width="1"/><rect x="894" y="162" width="17" height="2" fill="#000"/><path d="M917.0 155.5 L930.0 155.5" fill="none" stroke="#000" stroke-width="1"/><path d="M930.0 159.0 L930.0 152.0 L934.0 155.5 Z" fill="#000"/><path d="M1176.0 156.5 L1165.0 156.5 L1162.5 160.0" fill="none" stroke="#000" stroke-width="1"/><path d="M1159.0 160.0 L1166.0 160.0 L1162.5 164.0 Z" fill="#000"/><rect x="1396.5" y="149.5" width="11" height="2" fill="#fff" stroke="#000" stroke-width="1"/><rect x="1396.5" y="153.5" width="11" height="2" fill="#fff" stroke="#000" stroke-width="1"/><rect x="1396.5" y="157.5" width="11" height="2" fill="#fff" stroke="#000" stroke-width="1"/><rect x="1396.5" y="161.5" width="11" height="2" fill="#fff" stroke="#000" stroke-width="1"/><rect x="1409" y="148" width="2" height="17" fill="#000"/><path d="M1425.5 165.0 L1425.5 152.0" fill="none" stroke="#000" stroke-width="1"/><path d="M1429.0 152.0 L1422.0 152.0 L1425.5 148.0 Z" fill="#000"/><path d="M1648.5 147.0 L1648.5 158.0 L1652.0 160.5" fill="none" stroke="#000" stroke-width="1"/><path d="M1652.0 164.0 L1652.0 157.0 L1656.0 160.5 Z" fill="#000"/><path d="M904.5 443.0 L904.5 454.0 L901.0 456.5" fill="none" stroke="#000" stroke-width="1"/><path d="M901.0 460.0 L901.0 453.0 L897.0 456.5 Z" fill="#000"/><path d="M936.0 452.5 L925.0 452.5 L922.5 449.0" fill="none" stroke="#000" stroke-width="1"/><path d="M919.0 449.0 L926.0 449.0 L922.5 445.0 Z" fill="#000"/><path d="M949.5 461.0 L949.5 450.0 L953.0 447.5" fill="none" stroke="#000" stroke-width="1"/><path d="M953.0 444.0 L953.0 451.0 L957.0 447.5 Z" fill="#000"/><path d="M964.0 451.5 L975.0 451.5 L977.5 455.0" fill="none" stroke="#000" stroke-width="1"/><path d="M981.0 455.0 L974.0 455.0 L977.5 459.0 Z" fill="#000"/></svg>
<svg style="left:895.600px;top:306.500px" width="24" height="24" viewBox="0 0 24 24" fill="none" stroke="#222" stroke-width="1.35" stroke-linejoin="round"><path d="M22.70 12.00 L22.42 12.68 L21.67 13.27 L20.66 13.72 L19.69 14.06 L18.99 14.37 L18.65 14.76 L18.62 15.26 L18.90 15.98 L19.34 16.91 L19.74 17.94 L19.85 18.89 L19.57 19.57 L18.89 19.85 L17.94 19.74 L16.91 19.34 L15.98 18.90 L15.26 18.62 L14.76 18.65 L14.37 18.99 L14.06 19.69 L13.72 20.66 L13.27 21.67 L12.68 22.42 L12.00 22.70 L11.32 22.42 L10.73 21.67 L10.28 20.66 L9.94 19.69 L9.63 18.99 L9.24 18.65 L8.74 18.62 L8.02 18.90 L7.09 19.34 L6.06 19.74 L5.11 19.85 L4.43 19.57 L4.15 18.89 L4.26 17.94 L4.66 16.91 L5.10 15.98 L5.38 15.26 L5.35 14.76 L5.01 14.37 L4.31 14.06 L3.34 13.72 L2.33 13.27 L1.58 12.68 L1.30 12.00 L1.58 11.32 L2.33 10.73 L3.34 10.28 L4.31 9.94 L5.01 9.63 L5.35 9.24 L5.38 8.74 L5.10 8.02 L4.66 7.09 L4.26 6.06 L4.15 5.11 L4.43 4.43 L5.11 4.15 L6.06 4.26 L7.09 4.66 L8.02 5.10 L8.74 5.38 L9.24 5.35 L9.63 5.01 L9.94 4.31 L10.28 3.34 L10.73 2.33 L11.32 1.58 L12.00 1.30 L12.68 1.58 L13.27 2.33 L13.72 3.34 L14.06 4.31 L14.37 5.01 L14.76 5.35 L15.26 5.38 L15.98 5.10 L16.91 4.66 L17.94 4.26 L18.89 4.15 L19.57 4.43 L19.85 5.11 L19.74 6.06 L19.34 7.09 L18.90 8.02 L18.62 8.74 L18.65 9.24 L18.99 9.63 L19.69 9.94 L20.66 10.28 L21.67 10.73 L22.42 11.32 Z"/><circle cx="12" cy="12" r="3.7"/></svg>
<div class="hd" style="left:885px;top:409px;width:1035px;height:27px;border-top:2px solid #8c8c8c"></div>
<div class="t" style="left:888px;top:416px;">跟随相位</div>
<svg style="left:1751px;top:416px" width="14" height="14" viewBox="0 0 14 14"><circle cx="7" cy="7" r="5.8" fill="#fff" stroke="#333" stroke-width="1"/><circle cx="7" cy="7" r="3.1" fill="#333"/></svg>
<div class="t" style="left:1774px;top:415px;font-size:14.500px;height:16px;line-height:16px">母相位</div>
<svg style="left:1837px;top:416px" width="14" height="14" viewBox="0 0 14 14"><circle cx="7" cy="7" r="5.8" fill="#fff" stroke="#333" stroke-width="1"/></svg>
<div class="t" style="left:1860px;top:415px;font-size:14.500px;height:16px;line-height:16px">修正相位</div>
<div style="left:891px;top:466px;width:209px;height:25px;background:#33d663"></div>
<div style="left:1100px;top:466px;width:28px;height:25px;background:#76f778"></div>
<div style="left:1128px;top:466px;width:28px;height:25px;background:#ffff00"></div>
<div style="left:1156px;top:466px;width:237px;height:25px;background:#ee5860"></div>
<div style="left:1393px;top:466px;width:190px;height:25px;background:#33d663"></div>
<div style="left:1583px;top:466px;width:28px;height:25px;background:#76f778"></div>
<div style="left:1611px;top:466px;width:28px;height:25px;background:#ffff00"></div>
<div style="left:1639px;top:466px;width:257px;height:25px;background:#ee5860"></div>
<div class="bar" style="left:898px;top:466px">FP1</div>
<div class="bar" style="left:938px;top:466px;letter-spacing:0;font-size:14.500px">母相位</div>
<div class="bar" style="left:986px;top:466px;letter-spacing:2.300px">[1,7]</div>
<div class="bar" style="left:1039px;top:466px;letter-spacing:0;font-size:14.500px">修正相位</div>
<div class="bar" style="left:1101px;top:466px;letter-spacing:2.300px">[]</div>
<div style="left:891px;top:516px;width:1005px;height:25px;background:#cccccc"></div>
<div style="left:1836px;top:443px;width:50px;height:20px;border:1px solid #6e6e6e;background:#fff;text-align:center;font-size:14.500px;line-height:18px;padding-top:1px">常绿</div>
<div style="left:1902px;top:436px;width:17px;height:323px;background:#fff"></div>
<div style="left:1902px;top:436px;width:17px;height:17px;background:#fff;border-right:2px solid #787878;border-bottom:2px solid #787878"></div><svg style="left:1905.5px;top:442px" width="8" height="4" viewBox="0 0 8 4"><path d="M0 4 L4 0 L8 4 Z" fill="#000"/></svg>
<div style="left:1902px;top:453px;width:17px;height:18px;background:#fff;border-right:2px solid #787878;border-bottom:2px solid #787878"></div>
<div style="left:1902px;top:742px;width:17px;height:17px;background:#fff;border-right:2px solid #787878;border-bottom:2px solid #787878"></div><svg style="left:1905.5px;top:748px" width="8" height="4" viewBox="0 0 8 4"><path d="M0 0 L4 4 L8 0 Z" fill="#000"/></svg>
<div style="left:180px;top:759.500px;width:1740px;height:2.800px;background:#6a9df0"></div>
<div class="hd" style="left:180px;top:762px;width:703px;height:26px"></div>
<div class="t" style="left:183px;top:768px;">调度计划配置</div>
<div class="t" style="left:278px;top:768px;">调度计划：</div>
<div class="sel" style="left:352px;top:765px;width:50px;height:18px;line-height:16px">1<svg style="right:4px;top:4px" width="13" height="8" viewBox="0 0 13 8"><path d="M1.500 1 L6.500 6 L11.500 1" fill="none" stroke="#808080" stroke-width="1.2"/></svg></div>
<div class="t b" style="left:463px;top:768px;">调度列表</div>
<div class="t b" style="left:776px;top:768px;">新建</div>
<div class="t b" style="left:812px;top:768px;">保存</div>
<div class="t b" style="left:848px;top:768px;">删除</div>
<div class="t" style="left:190px;top:803px;">日计划号：</div>
<div class="sel" style="left:260px;top:800px;width:70px;height:19px;line-height:17px">2<svg style="right:4px;top:4px" width="13" height="8" viewBox="0 0 13 8"><path d="M1.500 1 L6.500 6 L11.500 1" fill="none" stroke="#808080" stroke-width="1.2"/></svg></div>
<div class="t b" style="left:793px;top:803px;font-size:13px">优先级说明</div>
<div class="gb" style="left:189px;top:834px;width:668px;height:39px"></div><div class="gl" style="left:202px;top:827px">月份</div>
<div class="gb" style="left:189px;top:886px;width:668px;height:65px"></div><div class="gl" style="left:202px;top:879px">日期</div>
<div class="gb" style="left:189px;top:963px;width:668px;height:39px"></div><div class="gl" style="left:202px;top:956px">星期</div>
<svg class="cb" style="left:199px;top:848px" width="13" height="13"><use href="#cb"/></svg><div class="cl" style="left:218px;top:847px;width:11px">1</div>
<svg class="cb" style="left:238px;top:848px" width="13" height="13"><use href="#cb"/></svg><div class="cl" style="left:257px;top:847px;width:11px">2</div>
<svg class="cb" style="left:277px;top:848px" width="13" height="13"><use href="#cb"/></svg><div class="cl" style="left:296px;top:847px;width:11px">3</div>
<svg class="cb" style="left:316px;top:848px" width="13" height="13"><use href="#cb"/></svg><div class="cl" style="left:335px;top:847px;width:11px">4</div>
<svg class="cb" style="left:355px;top:848px" width="13" height="13"><use href="#cb"/></svg><div class="cl" style="left:374px;top:847px;width:11px">5</div>
<svg class="cb" style="left:394px;top:848px" width="13" height="13"><use href="#cb"/></svg><div class="cl" style="left:413px;top:847px;width:11px">6</div>
<svg class="cb" style="left:433px;top:848px" width="13" height="13"><use href="#cb"/></svg><div class="cl" style="left:452px;top:847px;width:11px">7</div>
<svg class="cb" style="left:472px;top:848px" width="13" height="13"><use href="#cb"/></svg><div class="cl" style="left:491px;top:847px;width:11px">8</div>
<svg class="cb" style="left:511px;top:848px" width="13" height="13"><use href="#cb"/></svg><div class="cl" style="left:530px;top:847px;width:11px">9</div>
<svg class="cb" style="left:550px;top:848px" width="13" height="13"><use href="#cb"/></svg><div class="cl" style="left:569px;top:847px;width:11px">10</div>
<svg class="cb" style="left:589px;top:848px" width="13" height="13"><use href="#cb"/></svg><div class="cl" style="left:608px;top:847px;width:11px">11</div>
<svg class="cb" style="left:628px;top:848px" width="13" height="13"><use href="#cb"/></svg><div class="cl" style="left:647px;top:847px;width:11px">12</div>
<svg class="cb" style="left:797px;top:848px" width="13" height="13"><use href="#cb"/></svg><div class="cl" style="left:816px;top:847px;width:30px;font-size:14.500px;letter-spacing:0">全选</div>
<svg class="cb" style="left:199px;top:899px" width="13" height="13"><use href="#cb"/></svg><div class="cl" style="left:218px;top:898px;width:11px">1</div>
<svg class="cb" style="left:238px;top:899px" width="13" height="13"><use href="#cb"/></svg><div class="cl" style="left:257px;top:898px;width:11px">2</div>
<svg class="cb" style="left:276px;top:899px" width="13" height="13"><use href="#cb"/></svg><div class="cl" style="left:295px;top:898px;width:11px">3</div>
<svg class="cb" style="left:315px;top:899px" width="13" height="13"><use href="#cb"/></svg><div class="cl" style="left:334px;top:898px;width:11px">4</div>
<svg class="cb" style="left:354px;top:899px" width="13" height="13"><use href="#cb"/></svg><div class="cl" style="left:373px;top:898px;width:11px">5</div>
<svg class="cb" style="left:392px;top:899px" width="13" height="13"><use href="#cb"/></svg><div class="cl" style="left:411px;top:898px;width:11px">6</div>
<svg class="cb" style="left:431px;top:899px" width="13" height="13"><use href="#cb"/></svg><div class="cl" style="left:450px;top:898px;width:11px">7</div>
<svg class="cb" style="left:470px;top:899px" width="13" height="13"><use href="#cb"/></svg><div class="cl" style="left:489px;top:898px;width:11px">8</div>
<svg class="cb" style="left:508px;top:899px" width="13" height="13"><use href="#cb"/></svg><div class="cl" style="left:527px;top:898px;width:11px">9</div>
<svg class="cb" style="left:547px;top:899px" width="13" height="13"><use href="#cb"/></svg><div class="cl" style="left:566px;top:898px;width:11px">10</div>
<svg class="cb" style="left:586px;top:899px" width="13" height="13"><use href="#cb"/></svg><div class="cl" style="left:605px;top:898px;width:11px">11</div>
<svg class="cb" style="left:624px;top:899px" width="13" height="13"><use href="#cb"/></svg><div class="cl" style="left:643px;top:898px;width:11px">12</div>
<svg class="cb" style="left:663px;top:899px" width="13" height="13"><use href="#cb"/></svg><div class="cl" style="left:682px;top:898px;width:11px">13</div>
<svg class="cb" style="left:702px;top:899px" width="13" height="13"><use href="#cb"/></svg><div class="cl" style="left:721px;top:898px;width:11px">14</div>
<svg class="cb" style="left:740px;top:899px" width="13" height="13"><use href="#cb"/></svg><div class="cl" style="left:759px;top:898px;width:11px">15</div>
<svg class="cb" style="left:779px;top:899px" width="13" height="13"><use href="#cb"/></svg><div class="cl" style="left:798px;top:898px;width:11px">16</div>
<svg class="cb" style="left:818px;top:899px" width="13" height="13"><use href="#cb"/></svg><div class="cl" style="left:837px;top:898px;width:11px">17</div>
<svg class="cb" style="left:199px;top:925px" width="13" height="13"><use href="#cb"/></svg><div class="cl" style="left:218px;top:924px;width:11px">18</div>
<svg class="cb" style="left:238px;top:925px" width="13" height="13"><use href="#cb"/></svg><div class="cl" style="left:257px;top:924px;width:11px">19</div>
<svg class="cb" style="left:277px;top:925px" width="13" height="13"><use href="#cb"/></svg><div class="cl" style="left:296px;top:924px;width:11px">20</div>
<svg class="cb" style="left:316px;top:925px" width="13" height="13"><use href="#cb"/></svg><div class="cl" style="left:335px;top:924px;width:11px">21</div>
<svg class="cb" style="left:355px;top:925px" width="13" height="13"><use href="#cb"/></svg><div class="cl" style="left:374px;top:924px;width:11px">22</div>
<svg class="cb" style="left:394px;top:925px" width="13" height="13"><use href="#cb"/></svg><div class="cl" style="left:413px;top:924px;width:11px">23</div>
<svg class="cb" style="left:433px;top:925px" width="13" height="13"><use href="#cb"/></svg><div class="cl" style="left:452px;top:924px;width:11px">24</div>
<svg class="cb" style="left:472px;top:925px" width="13" height="13"><use href="#cb"/></svg><div class="cl" style="left:491px;top:924px;width:11px">25</div>
<svg class="cb" style="left:511px;top:925px" width="13" height="13"><use href="#cb"/></svg><div class="cl" style="left:530px;top:924px;width:11px">26</div>
<svg class="cb" style="left:550px;top:925px" width="13" height="13"><use href="#cb"/></svg><div class="cl" style="left:569px;top:924px;width:11px">27</div>
<svg class="cb" style="left:589px;top:925px" width="13" height="13"><use href="#cb"/></svg><div class="cl" style="left:608px;top:924px;width:11px">28</div>
<svg class="cb" style="left:628px;top:925px" width="13" height="13"><use href="#cb"/></svg><div class="cl" style="left:647px;top:924px;width:11px">29</div>
<svg class="cb" style="left:667px;top:925px" width="13" height="13"><use href="#cb"/></svg><div class="cl" style="left:686px;top:924px;width:11px">30</div>
<svg class="cb" style="left:706px;top:925px" width="13" height="13"><use href="#cb"/></svg><div class="cl" style="left:725px;top:924px;width:11px">31</div>
<svg class="cb" style="left:797px;top:925px" width="13" height="13"><use href="#cb"/></svg><div class="cl" style="left:816px;top:924px;width:30px;font-size:14.500px;letter-spacing:0">全选</div>
<svg class="cb" style="left:199px;top:977px" width="13" height="13"><use href="#cb"/></svg><div class="cl" style="left:218px;top:976px;width:10px;font-size:14.500px;letter-spacing:0">一</div>
<svg class="cb" style="left:249px;top:977px" width="13" height="13"><use href="#cb"/></svg><div class="cl" style="left:268px;top:976px;width:10px;font-size:14.500px;letter-spacing:0">二</div>
<svg class="cb" style="left:299px;top:977px" width="13" height="13"><use href="#cb"/></svg><div class="cl" style="left:318px;top:976px;width:10px;font-size:14.500px;letter-spacing:0">三</div>
<svg class="cb" style="left:349px;top:977px" width="13" height="13"><use href="#cb"/></svg><div class="cl" style="left:368px;top:976px;width:10px;font-size:14.500px;letter-spacing:0">四</div>
<svg class="cb" style="left:399px;top:977px" width="13" height="13"><use href="#cb"/></svg><div class="cl" style="left:418px;top:976px;width:10px;font-size:14.500px;letter-spacing:0">五</div>
<svg class="cb" style="left:449px;top:977px" width="13" height="13"><use href="#cb"/></svg><div class="cl" style="left:468px;top:976px;width:10px;font-size:14.500px;letter-spacing:0">六</div>
<svg class="cb" style="left:499px;top:977px" width="13" height="13"><use href="#cb"/></svg><div class="cl" style="left:518px;top:976px;width:10px;font-size:14.500px;letter-spacing:0">日</div>
<svg class="cb" style="left:797px;top:977px" width="13" height="13"><use href="#cb"/></svg><div class="cl" style="left:816px;top:976px;width:30px;font-size:14.500px;letter-spacing:0">全选</div>
<div style="left:866px;top:788px;width:17px;height:237px;background:#fff"></div>
<div style="left:866px;top:788px;width:17px;height:17px;background:#fff;border-right:2px solid #787878;border-bottom:2px solid #787878"></div><svg style="left:869.5px;top:794px" width="8" height="4" viewBox="0 0 8 4"><path d="M0 4 L4 0 L8 4 Z" fill="#000"/></svg>
<div style="left:866px;top:805px;width:17px;height:168px;background:#fff;border-right:2px solid #787878;border-bottom:2px solid #787878"></div>
<div style="left:866px;top:1008px;width:17px;height:17px;background:#fff;border-right:2px solid #787878;border-bottom:2px solid #787878"></div><svg style="left:869.5px;top:1014px" width="8" height="4" viewBox="0 0 8 4"><path d="M0 0 L4 4 L8 0 Z" fill="#000"/></svg>
<div style="left:180px;top:1025px;width:1740px;height:1px;background:#f0f0f0"></div>
<div class="hd" style="left:885px;top:762px;width:1035px;height:26px"></div>
<div class="t" style="left:888px;top:768px;">日计划配置</div>
<div class="t" style="left:983px;top:768px;">日计划号：</div>
<div class="sel" style="left:1057px;top:765px;width:50px;height:18px;line-height:16px">1<svg style="right:4px;top:4px" width="13" height="8" viewBox="0 0 13 8"><path d="M1.500 1 L6.500 6 L11.500 1" fill="none" stroke="#808080" stroke-width="1.2"/></svg></div>
<div class="t b" style="left:1777px;top:768px;">新建</div>
<div class="t b" style="left:1813px;top:768px;">保存</div>
<div class="t b" style="left:1849px;top:768px;">删除</div>
<div class="t b" style="left:1885px;top:768px;">重置</div>
<div class="th" style="left:908px;top:788px;width:83px">时段</div>
<div class="th" style="left:991px;top:788px;width:193px">运行模式</div>
<div class="th" style="left:1184px;top:788px;width:78px">策略号</div>
<div class="th" style="left:1262px;top:788px;width:79px">方案号</div>
<div class="th" style="left:1341px;top:788px;width:83px">周期(秒)</div>
<div class="th" style="left:1424px;top:788px;width:83px">协调相位</div>
<div class="th" style="left:1507px;top:788px;width:83px">相位差(秒)</div>
<div class="th" style="left:1590px;top:788px;width:102px">并发功能</div>
<div class="th" style="left:1692px;top:788px;width:103px">辅助功能</div>
<div class="th" style="left:1795px;top:788px;width:104px">特殊功能</div>
<div style="left:908px;top:813px;width:991px;height:1px;background:#5f5f5f"></div>
<div style="left:886px;top:788px;width:23px;height:26px;border-right:1px solid #d4d4d4"></div>
<div class="rh" style="left:886px;top:814px;width:23px">1</div>
<div class="td" style="left:908px;top:814px;width:83px;letter-spacing:1px">00:00</div>
<div class="td" style="left:991px;top:814px;width:193px;letter-spacing:.4px">本地协调控制</div>
<div class="td" style="left:1184px;top:814px;width:78px;letter-spacing:.4px">1</div>
<div class="td" style="left:1262px;top:814px;width:79px;letter-spacing:.4px">1</div>
<div class="td" style="left:1341px;top:814px;width:83px;letter-spacing:.4px">106</div>
<div class="td" style="left:1424px;top:814px;width:83px;letter-spacing:.4px"><span style="position:static;letter-spacing:2.500px">--</span></div>
<div class="td" style="left:1507px;top:814px;width:83px;letter-spacing:.4px">0</div>
<div class="td" style="left:1590px;top:814px;width:102px;letter-spacing:.4px"></div>
<div class="td" style="left:1692px;top:814px;width:103px;letter-spacing:.4px"></div>
<div class="td" style="left:1795px;top:814px;width:104px;letter-spacing:.4px"></div>
<svg style="left:1632px;top:817px" width="18" height="18"><use href="#ed"/></svg>
<svg style="left:1734px;top:817px" width="18" height="18"><use href="#ed"/></svg>
<svg style="left:1837px;top:817px" width="18" height="18"><use href="#ed"/></svg>
<div class="rh" style="left:886px;top:839px;width:23px">2</div>
<div class="td" style="left:908px;top:839px;width:83px;letter-spacing:1px">04:00</div>
<div class="td" style="left:991px;top:839px;width:193px;letter-spacing:.4px">本地协调控制</div>
<div class="td" style="left:1184px;top:839px;width:78px;letter-spacing:.4px">1</div>
<div class="td" style="left:1262px;top:839px;width:79px;letter-spacing:.4px">3</div>
<div class="td" style="left:1341px;top:839px;width:83px;letter-spacing:.4px">106</div>
<div class="td" style="left:1424px;top:839px;width:83px;letter-spacing:.4px"><span style="position:static;letter-spacing:2.500px">--</span></div>
<div class="td" style="left:1507px;top:839px;width:83px;letter-spacing:.4px">15</div>
<div class="td" style="left:1590px;top:839px;width:102px;letter-spacing:.4px"></div>
<div class="td" style="left:1692px;top:839px;width:103px;letter-spacing:.4px"></div>
<div class="td" style="left:1795px;top:839px;width:104px;letter-spacing:.4px"></div>
<svg style="left:1632px;top:842px" width="18" height="18"><use href="#ed"/></svg>
<svg style="left:1734px;top:842px" width="18" height="18"><use href="#ed"/></svg>
<svg style="left:1837px;top:842px" width="18" height="18"><use href="#ed"/></svg>
<div class="rh" style="left:886px;top:864px;width:23px">3</div>
<div class="td" style="left:908px;top:864px;width:83px;letter-spacing:1px">06:00</div>
<div class="td" style="left:991px;top:864px;width:193px;letter-spacing:.4px">本地协调控制</div>
<div class="td" style="left:1184px;top:864px;width:78px;letter-spacing:.4px">1</div>
<div class="td" style="left:1262px;top:864px;width:79px;letter-spacing:.4px">3</div>
<div class="td" style="left:1341px;top:864px;width:83px;letter-spacing:.4px">106</div>
<div class="td" style="left:1424px;top:864px;width:83px;letter-spacing:.4px"><span style="position:static;letter-spacing:2.500px">--</span></div>
<div class="td" style="left:1507px;top:864px;width:83px;letter-spacing:.4px">15</div>
<div class="td" style="left:1590px;top:864px;width:102px;letter-spacing:.4px"></div>
<div class="td" style="left:1692px;top:864px;width:103px;letter-spacing:.4px"></div>
<div class="td" style="left:1795px;top:864px;width:104px;letter-spacing:.4px"></div>
<svg style="left:1632px;top:867px" width="18" height="18"><use href="#ed"/></svg>
<svg style="left:1734px;top:867px" width="18" height="18"><use href="#ed"/></svg>
<svg style="left:1837px;top:867px" width="18" height="18"><use href="#ed"/></svg>
<div class="rh" style="left:886px;top:889px;width:23px">4</div>
<div class="td" style="left:908px;top:889px;width:83px;letter-spacing:1px">07:15</div>
<div class="td" style="left:991px;top:889px;width:193px;letter-spacing:.4px">本地协调控制</div>
<div class="td" style="left:1184px;top:889px;width:78px;letter-spacing:.4px">1</div>
<div class="td" style="left:1262px;top:889px;width:79px;letter-spacing:.4px">4</div>
<div class="td" style="left:1341px;top:889px;width:83px;letter-spacing:.4px">106</div>
<div class="td" style="left:1424px;top:889px;width:83px;letter-spacing:.4px"><span style="position:static;letter-spacing:2.500px">--</span></div>
<div class="td" style="left:1507px;top:889px;width:83px;letter-spacing:.4px">15</div>
<div class="td" style="left:1590px;top:889px;width:102px;letter-spacing:.4px"></div>
<div class="td" style="left:1692px;top:889px;width:103px;letter-spacing:.4px"></div>
<div class="td" style="left:1795px;top:889px;width:104px;letter-spacing:.4px"></div>
<svg style="left:1632px;top:892px" width="18" height="18"><use href="#ed"/></svg>
<svg style="left:1734px;top:892px" width="18" height="18"><use href="#ed"/></svg>
<svg style="left:1837px;top:892px" width="18" height="18"><use href="#ed"/></svg>
<div class="rh" style="left:886px;top:914px;width:23px">5</div>
<div class="td" style="left:908px;top:914px;width:83px;letter-spacing:1px">08:30</div>
<div class="td" style="left:991px;top:914px;width:193px;letter-spacing:.4px">本地协调控制</div>
<div class="td" style="left:1184px;top:914px;width:78px;letter-spacing:.4px">1</div>
<div class="td" style="left:1262px;top:914px;width:79px;letter-spacing:.4px">5</div>
<div class="td" style="left:1341px;top:914px;width:83px;letter-spacing:.4px">106</div>
<div class="td" style="left:1424px;top:914px;width:83px;letter-spacing:.4px"><span style="position:static;letter-spacing:2.500px">--</span></div>
<div class="td" style="left:1507px;top:914px;width:83px;letter-spacing:.4px">15</div>
<div class="td" style="left:1590px;top:914px;width:102px;letter-spacing:.4px"></div>
<div class="td" style="left:1692px;top:914px;width:103px;letter-spacing:.4px"></div>
<div class="td" style="left:1795px;top:914px;width:104px;letter-spacing:.4px"></div>
<svg style="left:1632px;top:917px" width="18" height="18"><use href="#ed"/></svg>
<svg style="left:1734px;top:917px" width="18" height="18"><use href="#ed"/></svg>
<svg style="left:1837px;top:917px" width="18" height="18"><use href="#ed"/></svg>
<div class="rh" style="left:886px;top:939px;width:23px">6</div>
<div class="td" style="left:908px;top:939px;width:83px;letter-spacing:1px">09:30</div>
<div class="td" style="left:991px;top:939px;width:193px;letter-spacing:.4px">本地协调控制</div>
<div class="td" style="left:1184px;top:939px;width:78px;letter-spacing:.4px">1</div>
<div class="td" style="left:1262px;top:939px;width:79px;letter-spacing:.4px">6</div>
<div class="td" style="left:1341px;top:939px;width:83px;letter-spacing:.4px">106</div>
<div class="td" style="left:1424px;top:939px;width:83px;letter-spacing:.4px"><span style="position:static;letter-spacing:2.500px">--</span></div>
<div class="td" style="left:1507px;top:939px;width:83px;letter-spacing:.4px">15</div>
<div class="td" style="left:1590px;top:939px;width:102px;letter-spacing:.4px"></div>
<div class="td" style="left:1692px;top:939px;width:103px;letter-spacing:.4px"></div>
<div class="td" style="left:1795px;top:939px;width:104px;letter-spacing:.4px"></div>
<svg style="left:1632px;top:942px" width="18" height="18"><use href="#ed"/></svg>
<svg style="left:1734px;top:942px" width="18" height="18"><use href="#ed"/></svg>
<svg style="left:1837px;top:942px" width="18" height="18"><use href="#ed"/></svg>
<div class="rh" style="left:886px;top:964px;width:23px">7</div>
<div class="td" style="left:908px;top:964px;width:83px;letter-spacing:1px">10:00</div>
<div class="td" style="left:991px;top:964px;width:193px;letter-spacing:.4px">本地协调控制</div>
<div class="td" style="left:1184px;top:964px;width:78px;letter-spacing:.4px">1</div>
<div class="td" style="left:1262px;top:964px;width:79px;letter-spacing:.4px">7</div>
<div class="td" style="left:1341px;top:964px;width:83px;letter-spacing:.4px">106</div>
<div class="td" style="left:1424px;top:964px;width:83px;letter-spacing:.4px"><span style="position:static;letter-spacing:2.500px">--</span></div>
<div class="td" style="left:1507px;top:964px;width:83px;letter-spacing:.4px">15</div>
<div class="td" style="left:1590px;top:964px;width:102px;letter-spacing:.4px"></div>
<div class="td" style="left:1692px;top:964px;width:103px;letter-spacing:.4px"></div>
<div class="td" style="left:1795px;top:964px;width:104px;letter-spacing:.4px"></div>
<svg style="left:1632px;top:967px" width="18" height="18"><use href="#ed"/></svg>
<svg style="left:1734px;top:967px" width="18" height="18"><use href="#ed"/></svg>
<svg style="left:1837px;top:967px" width="18" height="18"><use href="#ed"/></svg>
<div class="rh" style="left:886px;top:989px;width:23px">8</div>
<div class="td" style="left:908px;top:989px;width:83px;letter-spacing:1px">11:15</div>
<div class="td" style="left:991px;top:989px;width:193px;letter-spacing:.4px">本地协调控制</div>
<div class="td" style="left:1184px;top:989px;width:78px;letter-spacing:.4px">1</div>
<div class="td" style="left:1262px;top:989px;width:79px;letter-spacing:.4px">8</div>
<div class="td" style="left:1341px;top:989px;width:83px;letter-spacing:.4px">106</div>
<div class="td" style="left:1424px;top:989px;width:83px;letter-spacing:.4px"><span style="position:static;letter-spacing:2.500px">--</span></div>
<div class="td" style="left:1507px;top:989px;width:83px;letter-spacing:.4px">15</div>
<div class="td" style="left:1590px;top:989px;width:102px;letter-spacing:.4px"></div>
<div class="td" style="left:1692px;top:989px;width:103px;letter-spacing:.4px"></div>
<div class="td" style="left:1795px;top:989px;width:104px;letter-spacing:.4px"></div>
<svg style="left:1632px;top:992px" width="18" height="18"><use href="#ed"/></svg>
<svg style="left:1734px;top:992px" width="18" height="18"><use href="#ed"/></svg>
<svg style="left:1837px;top:992px" width="18" height="18"><use href="#ed"/></svg>
<div class="rh" style="left:886px;top:1014px;width:23px">9</div>
<div class="td" style="left:908px;top:1014px;width:83px;letter-spacing:1px">12:00</div>
<div class="td" style="left:991px;top:1014px;width:193px;letter-spacing:.4px">本地协调控制</div>
<div class="td" style="left:1184px;top:1014px;width:78px;letter-spacing:.4px">1</div>
<div class="td" style="left:1262px;top:1014px;width:79px;letter-spacing:.4px">9</div>
<div class="td" style="left:1341px;top:1014px;width:83px;letter-spacing:.4px">106</div>
<div class="td" style="left:1424px;top:1014px;width:83px;letter-spacing:.4px"><span style="position:static;letter-spacing:2.500px">--</span></div>
<div class="td" style="left:1507px;top:1014px;width:83px;letter-spacing:.4px">15</div>
<div class="td" style="left:1590px;top:1014px;width:102px;letter-spacing:.4px"></div>
<div class="td" style="left:1692px;top:1014px;width:103px;letter-spacing:.4px"></div>
<div class="td" style="left:1795px;top:1014px;width:104px;letter-spacing:.4px"></div>
<svg style="left:1632px;top:1017px" width="18" height="18"><use href="#ed"/></svg>
<svg style="left:1734px;top:1017px" width="18" height="18"><use href="#ed"/></svg>
<svg style="left:1837px;top:1017px" width="18" height="18"><use href="#ed"/></svg>
<div style="left:1902px;top:788px;width:17px;height:237px;background:#fff"></div>
<div style="left:1902px;top:788px;width:17px;height:17px;background:#fff;border-right:2px solid #787878;border-bottom:2px solid #787878"></div><svg style="left:1905.5px;top:794px" width="8" height="4" viewBox="0 0 8 4"><path d="M0 4 L4 0 L8 4 Z" fill="#000"/></svg>
<div style="left:1902px;top:805px;width:17px;height:80px;background:#fff;border-right:2px solid #787878;border-bottom:2px solid #787878"></div>
<div style="left:1902px;top:1008px;width:17px;height:17px;background:#fff;border-right:2px solid #787878;border-bottom:2px solid #787878"></div><svg style="left:1905.5px;top:1014px" width="8" height="4" viewBox="0 0 8 4"><path d="M0 0 L4 4 L8 0 Z" fill="#000"/></svg>
<div style="left:0;top:0;width:1920px;height:60px;background:linear-gradient(to bottom,#62a5f6 0%,#4a98f5 12%,#1d82f2 36%,#1a80f2 42%,#3a8ff4 70%,#5a9ff5 100%)"></div>
<svg style="left:8px;top:3px" width="54" height="54" viewBox="0 0 54 54">
<circle cx="27" cy="27" r="25" fill="#6cb4ec"/>
<path d="M34 25 q0-4 4-4 q1-4 6-3 q4 0 4 4 q3 0 3 3 q0 3-3 3 h-11 q-3 0-3-3z" fill="#bcdcf5"/>
<path d="M7 38 q0-4 4-4 q1-4 6-3 q4 0 4 4 q3 0 3 3 q0 3-3 3 h-11 q-3 0-3-3z" fill="#c4e0f6"/>
<rect x="26" y="46" width="2.4" height="7" fill="#2b2140"/>
<rect x="18.5" y="5" width="17" height="43" rx="8.5" fill="#4b4a5a" stroke="#35324a" stroke-width="1"/>
<circle cx="27" cy="14" r="6" fill="#f4643c"/><circle cx="28" cy="12.5" r="3" fill="#f7805c" opacity=".7"/>
<circle cx="27" cy="27" r="6" fill="#fdd835"/><circle cx="28" cy="25.5" r="3" fill="#ffe45e" opacity=".7"/>
<circle cx="27" cy="40" r="6" fill="#7bd962"/><circle cx="28" cy="38.5" r="3" fill="#9be585" opacity=".7"/>
</svg>
<div style="left:75px;top:3px;width:9px;height:9px;background:#4d98f5"></div>
<div style="left:84px;top:3px;width:12px;height:9px;background:#4d98f5"></div>
<div style="left:96px;top:3px;width:12px;height:9px;background:#4a97f5"></div>
<div style="left:108px;top:3px;width:12px;height:9px;background:#4896f5"></div>
<div style="left:120px;top:3px;width:12px;height:9px;background:#4795f4"></div>
<div style="left:132px;top:3px;width:16px;height:9px;background:#4594f4"></div>
<div style="left:75px;top:12px;width:9px;height:12px;background:#3f91f5"></div>
<div style="left:84px;top:12px;width:12px;height:12px;background:#5aa2f7"></div>
<div style="left:96px;top:12px;width:12px;height:12px;background:#4f9bf6"></div>
<div style="left:108px;top:12px;width:12px;height:12px;background:#2a86f3"></div>
<div style="left:120px;top:12px;width:12px;height:12px;background:#4191f5"></div>
<div style="left:132px;top:12px;width:16px;height:12px;background:#2383f3"></div>
<div style="left:75px;top:24px;width:9px;height:12px;background:#3e90f5"></div>
<div style="left:84px;top:24px;width:12px;height:12px;background:#c4dffc"></div>
<div style="left:96px;top:24px;width:12px;height:12px;background:#a3cbfa"></div>
<div style="left:108px;top:24px;width:12px;height:12px;background:#a0cbfa"></div>
<div style="left:120px;top:24px;width:12px;height:12px;background:#5b9ef5"></div>
<div style="left:132px;top:24px;width:16px;height:12px;background:#2181f3"></div>
<div style="left:75px;top:36px;width:9px;height:11px;background:#579ff6"></div>
<div style="left:84px;top:36px;width:12px;height:11px;background:#74b0f8"></div>
<div style="left:96px;top:36px;width:12px;height:11px;background:#7fb5f8"></div>
<div style="left:108px;top:36px;width:12px;height:11px;background:#7fb5f8"></div>
<div style="left:120px;top:36px;width:12px;height:11px;background:#73adf7"></div>
<div style="left:132px;top:36px;width:16px;height:11px;background:#398df4"></div>
<div class="t" style="left:1485px;top:14px;height:36px;line-height:36px;font-family:'Liberation Sans','Noto Sans CJK SC',sans-serif;font-weight:900;font-style:italic;font-size:25.200px;color:#ffff00;text-shadow:.5px .5px 0 rgba(120,150,90,.5);letter-spacing:0px">山东双百电子有限公司</div>
<svg style="left:1798px;top:17px" width="24" height="24" viewBox="0 0 24 24" fill="none" stroke="#fff" stroke-width="1.3" stroke-linejoin="round" stroke-linecap="round">
<path d="M3.300 12.400 L12 3.400 L20.700 12.400"/><path d="M5.800 11 V19 Q5.800 20.500 7.300 20.500 H9.300 Q10.200 20.500 10.200 19.600 V16.500 Q10.200 14.800 12 14.800 Q13.800 14.800 13.800 16.500 V19.600 Q13.800 20.500 14.700 20.500 H16.700 Q18.200 20.500 18.200 19 V11"/><path d="M15 4.700 H16.800 Q17.500 4.700 17.500 5.400 V8.700"/></svg>
<div style="left:1843px;top:28px;width:17px;height:1.4px;background:#fff;opacity:.95"></div>
<svg style="left:1885px;top:22.500px" width="16" height="16" viewBox="0 0 16 16" stroke="#fff" stroke-width="1.25" stroke-linecap="round"><path d="M2 2 L14 14 M14 2 L2 14"/></svg>
</body></html>
